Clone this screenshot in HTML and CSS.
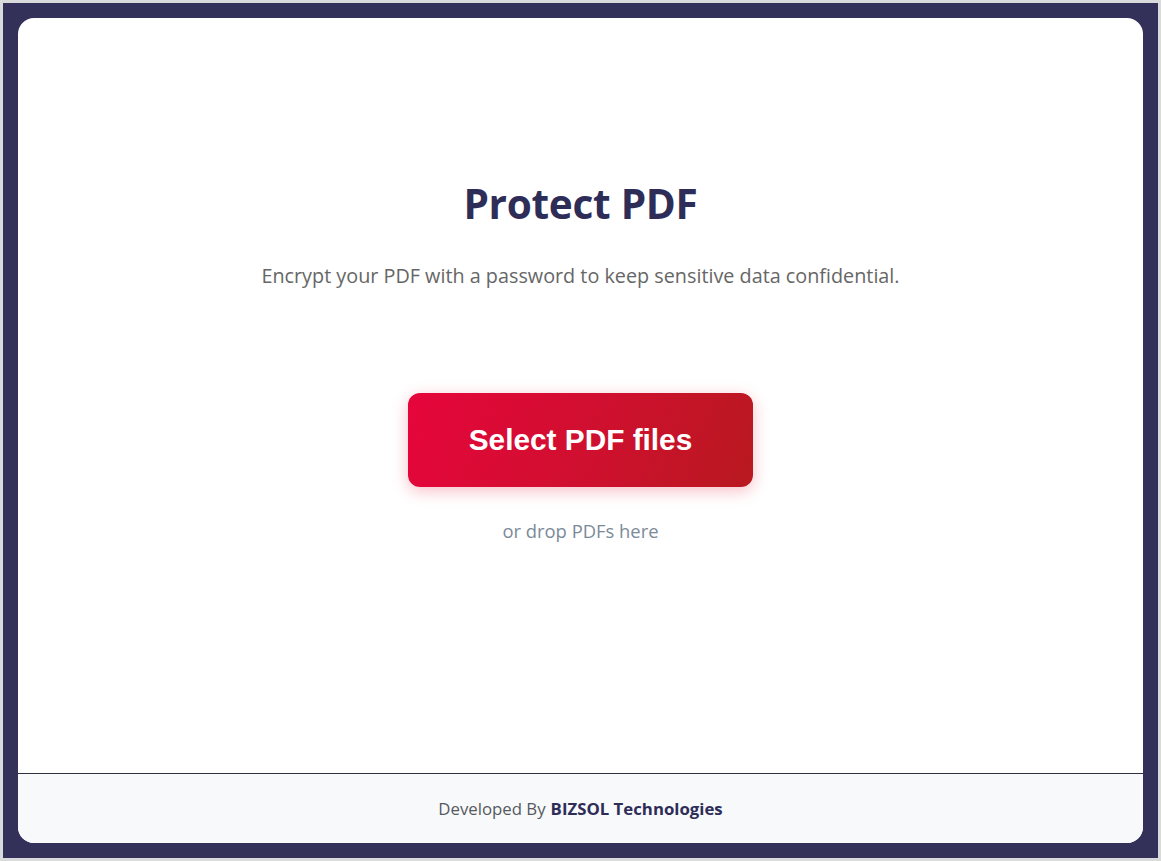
FILE: index.html
```html
<!DOCTYPE html>
<html lang="en">
<head>
<meta charset="utf-8">
<title>Protect PDF</title>
<link rel="stylesheet" href="styles.css">
</head>
<body>
<div class="frame">
  <div class="card">
    <main class="main">
      <h1 class="title">Protect PDF</h1>
      <p class="subtitle">Encrypt your PDF with a password to keep sensitive data confidential.</p>
      <button class="select-btn" type="button">Select PDF files</button>
      <p class="drop">or drop PDFs here</p>
    </main>
    <footer class="footer">
      <span class="dev">Developed By</span> <strong class="brand">BIZSOL Technologies</strong>
    </footer>
  </div>
</div>
</body>
</html>
```

FILE: styles.css
```css
html, body {
  margin: 0;
  padding: 0;
}
body {
  width: 1161px;
  height: 861px;
  background: #d9dadc;
  overflow: hidden;
  font-family: "Open Sans", "Noto Sans", sans-serif;
}
.frame {
  margin: 3px;
  width: 1155px;
  height: 855px;
  box-sizing: border-box;
  padding: 15px;
  background: #33315a;
}
.card {
  width: 1125px;
  height: 825px;
  background: #ffffff;
  border-radius: 16px;
  overflow: hidden;
  display: flex;
  flex-direction: column;
}
.main {
  flex: 1;
  display: flex;
  flex-direction: column;
  align-items: center;
  padding-top: 162px;
  box-sizing: border-box;
}
.title {
  margin: 0;
  font-size: 40.6px;
  line-height: 48px;
  font-weight: 700;
  color: #2e2d58;
  letter-spacing: -0.3px;
}
.subtitle {
  margin: 34px 0 0;
  font-size: 19.8px;
  line-height: 28px;
  color: #666666;
}
.select-btn {
  margin-top: 103px;
  width: 345px;
  height: 94px;
  border: none;
  border-radius: 12px;
  background: linear-gradient(110deg, #e6053b 0%, #d10f30 50%, #b8191f 100%);
  color: #ffffff;
  font-family: "Liberation Sans", Arial, sans-serif;
  font-size: 29.8px;
  font-weight: 700;
  box-shadow: 0 4px 16px rgba(225, 20, 50, 0.28);
  cursor: pointer;
}
.drop {
  margin: 31px 0 0;
  font-size: 18.4px;
  line-height: 26px;
  color: #7b8a98;
}
.footer {
  height: 69px;
  border-top: 1px solid #2f2f3f;
  background: #f8f9fb;
  display: flex;
  align-items: center;
  justify-content: center;
  gap: 5px;
  font-size: 16.8px;
}
.dev {
  color: #555a60;
}
.brand {
  color: #2e2d58;
  font-weight: 700;
}
```
